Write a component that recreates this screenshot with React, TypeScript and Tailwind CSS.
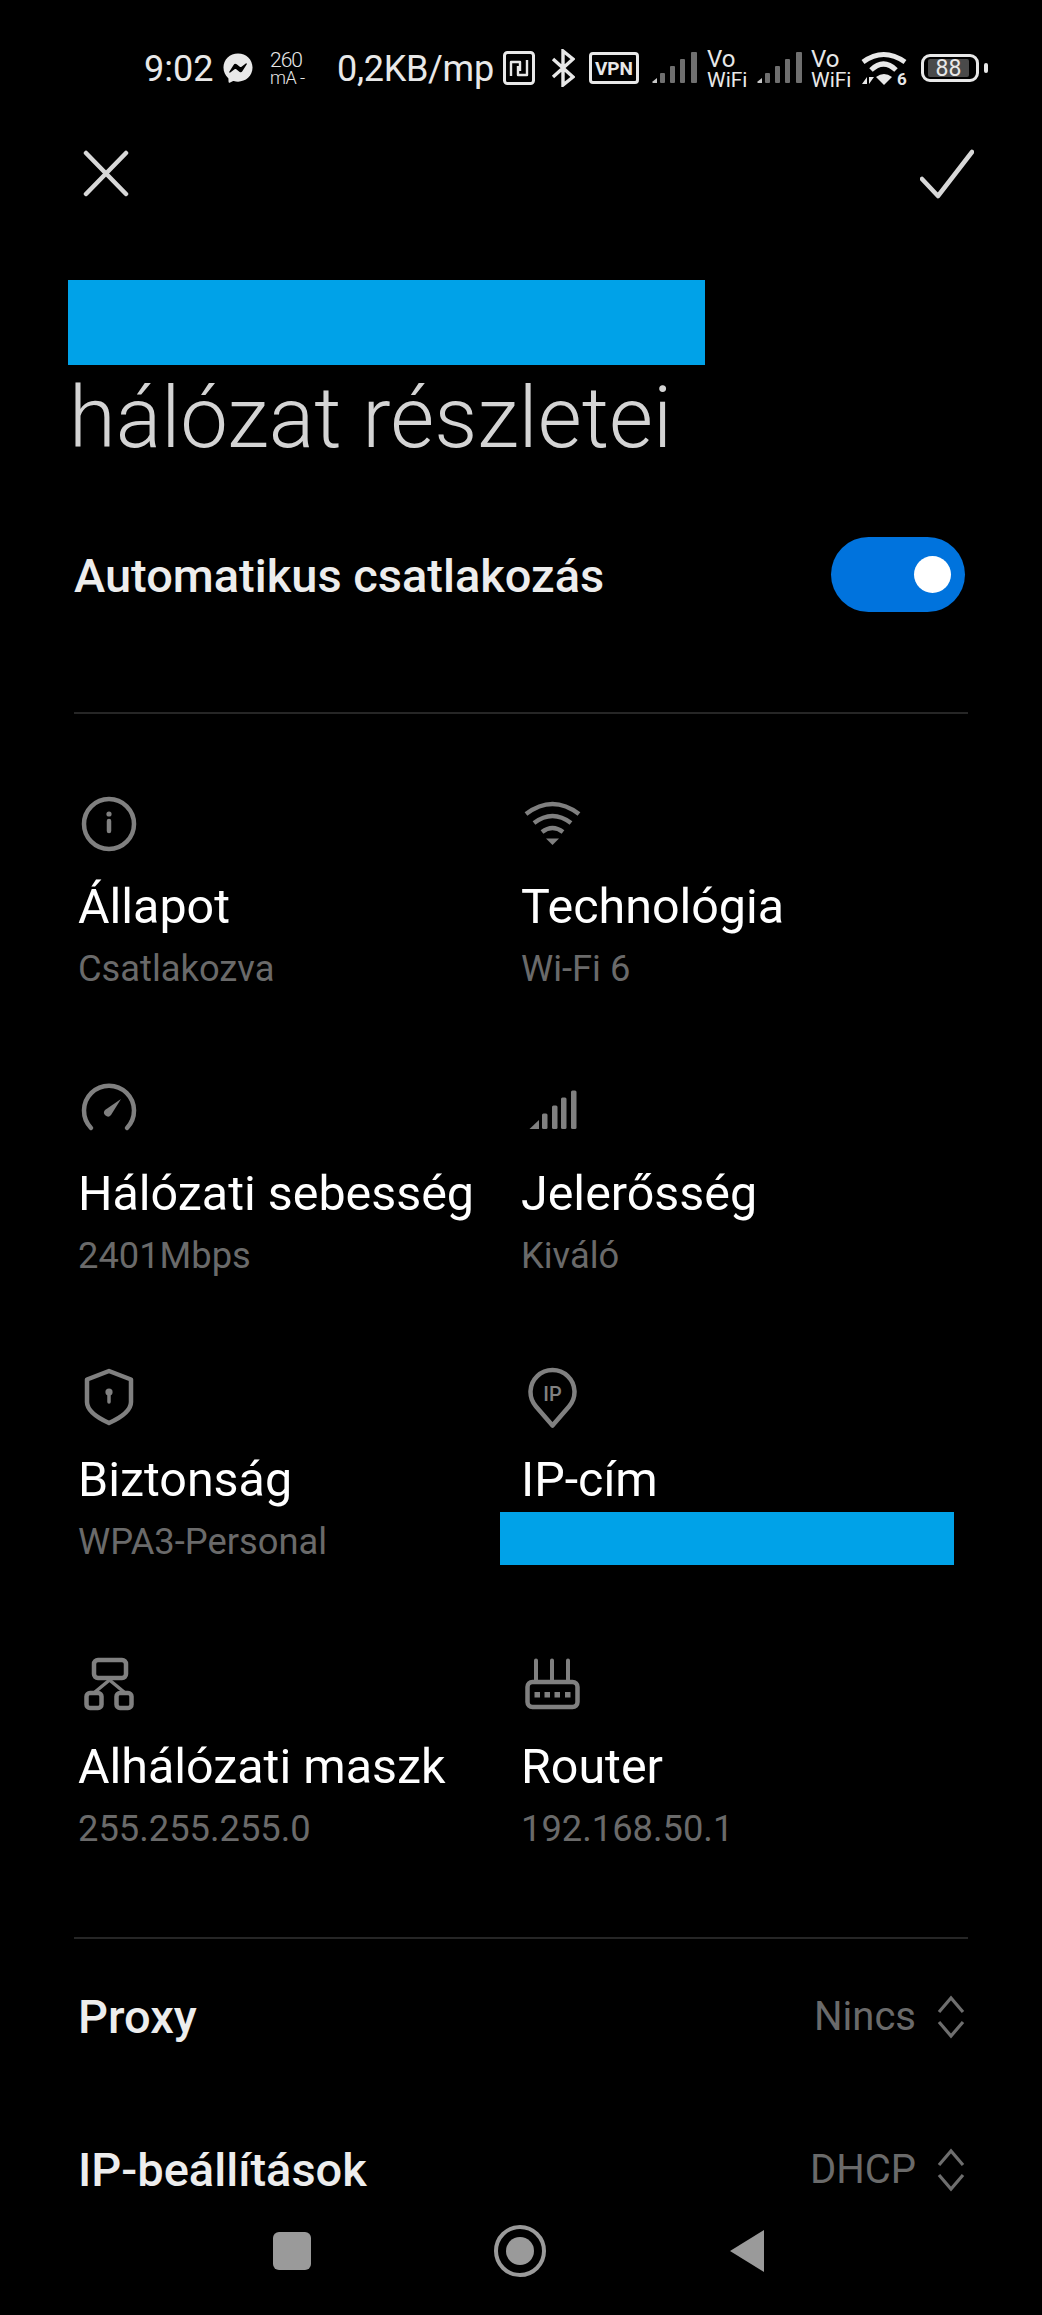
import { FaFacebookMessenger } from "react-icons/fa";

const ICON = "#808080";

function InfoIcon() {
  return (
    <svg width="64" height="64" viewBox="0 0 64 64" fill="none" stroke={ICON} strokeWidth="4.5" strokeLinecap="round">
      <circle cx="31" cy="33" r="25" />
      <path d="M31 30v10" />
      <circle cx="31" cy="23" r="2.6" fill={ICON} stroke="none" />
    </svg>
  );
}

function WifiIcon() {
  return (
    <svg width="64" height="64" viewBox="0 0 64 64" fill="none" stroke={ICON} strokeWidth="4.5">
      <path d="M5 23Q31.5 3 58 23" />
      <path d="M13 32Q31.5 18 50 32" />
      <path d="M21 41Q31.5 33 42 41" />
      <path d="M25 47.5h13l-6.5 6.5z" fill={ICON} stroke="none" />
    </svg>
  );
}

function SpeedIcon() {
  return (
    <svg width="64" height="64" viewBox="0 0 64 64" fill="none" stroke={ICON} strokeWidth="4.5" strokeLinecap="round">
      <path d="M13 50A25 25 0 1 1 49 50" />
      <path d="M27 32l16-11-10 16a3.5 3.5 0 0 1-6-5z" fill={ICON} stroke="none" />
    </svg>
  );
}

function SignalIcon() {
  return (
    <svg width="64" height="64" viewBox="0 0 64 64" fill={ICON}>
      <path d="M8.5 51L18 42v9z" />
      <rect x="21" y="35.5" width="5.5" height="15.5" rx="1.5" />
      <rect x="31" y="27.5" width="5.5" height="23.5" rx="1.5" />
      <rect x="40" y="19.5" width="5.5" height="31.5" rx="1.5" />
      <rect x="50" y="12.5" width="5.5" height="38.5" rx="1.5" />
    </svg>
  );
}

function ShieldIcon() {
  return (
    <svg width="64" height="64" viewBox="0 0 64 64" fill="none" stroke={ICON} strokeWidth="4.5" strokeLinejoin="round">
      <path d="M31 7L53 15.5V38Q53 49 31 59Q9 49 9 38V15.5Z" />
      <circle cx="31" cy="28" r="3.6" fill={ICON} stroke="none" />
      <path d="M31 28v10" strokeWidth="3.5" strokeLinecap="round" />
    </svg>
  );
}

function PinIcon() {
  return (
    <svg width="64" height="64" viewBox="0 0 64 64" fill="none" stroke={ICON} strokeWidth="4.5" strokeLinejoin="round">
      <path d="M31.5 61.5L15 42.5A22 22 0 1 1 48 42.5Z" />
      <text x="31.5" y="36.5" textAnchor="middle" fontSize="20" fontWeight="500" fill={ICON} stroke="none" fontFamily="Roboto, sans-serif">
        IP
      </text>
    </svg>
  );
}

function SubnetIcon() {
  return (
    <svg width="64" height="64" viewBox="0 0 64 64" fill="none" stroke={ICON} strokeWidth="4.5" strokeLinecap="round">
      <rect x="16" y="9" width="32" height="18" rx="4" />
      <rect x="8.5" y="42" width="15" height="15" rx="3.5" />
      <rect x="38.5" y="42" width="15" height="15" rx="3.5" />
      <path d="M31.5 29L17 41M31.5 29L46 41" strokeWidth="3.5" />
    </svg>
  );
}

function RouterIcon() {
  return (
    <svg width="64" height="64" viewBox="0 0 64 64" fill="none" stroke={ICON} strokeWidth="4.5" strokeLinecap="round">
      <rect x="6.5" y="31" width="50" height="25" rx="5" />
      <path d="M15 9.5v20M31 9.5v20M47 9.5v20" strokeWidth="4" />
      <g fill={ICON} stroke="none">
        <rect x="13.5" y="41" width="5.5" height="5.5" />
        <rect x="23.5" y="41" width="5.5" height="5.5" />
        <rect x="33.5" y="41" width="5.5" height="5.5" />
        <rect x="44" y="41" width="5.5" height="5.5" />
      </g>
    </svg>
  );
}

function Chevrons() {
  return (
    <svg width="28" height="44" viewBox="0 0 28 44" fill="none" stroke="#6e6e6e" strokeWidth="3.2" className="ml-[21px]">
      <path d="M2 17L14 3l12 14" />
      <path d="M2 27l12 14 12-14" />
    </svg>
  );
}

function StatusSignal() {
  return (
    <svg width="46" height="32" viewBox="0 0 46 32" fill="#6f6f6f">
      <path d="M0 30l5-4v5H1z" fill="#c8c8c8" />
      <rect x="8" y="21" width="5" height="10" rx="1" />
      <rect x="18" y="14" width="5" height="17" rx="1" />
      <rect x="28" y="7" width="5" height="24" rx="1" />
      <rect x="39" y="0" width="6" height="31" rx="1" />
    </svg>
  );
}

function VoWifi() {
  return (
    <div className="flex flex-col w-[41px] text-[#e8e8e8]">
      <span className="text-[24px] h-[24px] leading-[22px]">Vo</span>
      <span className="text-[21px] h-[16px] leading-[16px]">WiFi</span>
    </div>
  );
}

const cells = [
  { icon: <InfoIcon />, title: "Állapot", sub: "Csatlakozva" },
  { icon: <WifiIcon />, title: "Technológia", sub: "Wi-Fi 6" },
  { icon: <SpeedIcon />, title: "Hálózati sebesség", sub: "2401Mbps" },
  { icon: <SignalIcon />, title: "Jelerősség", sub: "Kiváló" },
  { icon: <ShieldIcon />, title: "Biztonság", sub: "WPA3-Personal" },
  { icon: <PinIcon />, title: "IP-cím", sub: "" },
  { icon: <SubnetIcon />, title: "Alhálózati maszk", sub: "255.255.255.0" },
  { icon: <RouterIcon />, title: "Router", sub: "192.168.50.1" },
];

export default function App() {
  return (
    <div className="w-[1042px] h-[2315px] overflow-hidden bg-black text-white font-['Roboto',sans-serif]">
      {/* Status bar */}
      <div className="h-[136px] pl-[144px] flex items-center text-[#e8e8e8]">
        <span className="text-[36px] w-[70px] shrink-0 pt-[2px]">9:02</span>
        <FaFacebookMessenger className="ml-[9px] text-[30px] shrink-0" />
        <div className="ml-[17px] w-[36px] shrink-0 flex flex-col items-start font-light">
          <span className="text-[21px] h-[20px] leading-[20px] tracking-[-1px]">260</span>
          <span className="text-[18px] h-[16px] leading-[16px] tracking-[-0.5px]">mA -</span>
        </div>
        <span className="ml-[31px] text-[36px] w-[157px] shrink-0 tracking-[-0.3px] pt-[2px]">0,2KB/mp</span>
        <svg width="32" height="34" viewBox="0 0 32 34" fill="none" stroke="#e8e8e8" strokeWidth="3" strokeLinejoin="round" className="ml-[9px] shrink-0">
          <rect x="1.5" y="1.5" width="29" height="31" rx="3" />
          <path d="M8 25V11H17V20M24 9V24H15V15" strokeWidth="2.4" />
        </svg>
        <svg width="24" height="38" viewBox="0 0 24 38" fill="none" stroke="#e8e8e8" strokeWidth="3.4" className="ml-[16px] shrink-0">
          <path d="M2 10l20 18-10 8V2l10 8L2 28" />
        </svg>
        <div className="ml-[14px] w-[50px] h-[32px] shrink-0 border-[3px] border-[#e8e8e8] rounded-[4px] flex items-center justify-center text-[19px] font-bold leading-none">
          VPN
        </div>
        <div className="ml-[13px]"><StatusSignal /></div>
        <div className="ml-[9px]"><VoWifi /></div>
        <div className="ml-[9px]"><StatusSignal /></div>
        <div className="ml-[8px]"><VoWifi /></div>
        <svg width="46" height="40" viewBox="0 0 46 40" fill="none" stroke="#e8e8e8" strokeWidth="5" className="ml-[9px] shrink-0 overflow-visible">
          <path d="M2 14Q22.500 -1 44 14" />
          <path d="M10 22Q22.500 10 35 22" />
          <path d="M15 29Q23 23 31 29L23 37Z" fill="#e8e8e8" stroke="none" />
          <path d="M1 36h5v-7zM8 29v7l5-7z" fill="#e8e8e8" stroke="none" />
          <text x="36" y="37" fontSize="17" fontWeight="700" fill="#e8e8e8" stroke="none" fontFamily="Roboto, sans-serif">6</text>
        </svg>
        <div className="ml-[14px] w-[58px] h-[28px] shrink-0 border-[3px] border-[#e8e8e8] rounded-[9px] py-[2px] pl-[4px] flex">
          <div className="w-[41px] bg-[#4a4a4a] rounded-[2px] flex items-center justify-center text-[23px] leading-none">88</div>
        </div>
        <div className="ml-[5px] w-[4px] h-[10px] rounded-full bg-[#e8e8e8] shrink-0" />
      </div>

      {/* Close / confirm */}
      <div className="mt-[8px] h-[60px] pl-[82px] pr-[68px] flex items-center justify-between">
        <svg width="48" height="48" viewBox="0 0 48 48" fill="none" stroke="#d8d8d8" strokeWidth="4.500" strokeLinecap="round">
          <path d="M4 3l40 41M44 3L4 44" />
        </svg>
        <svg width="54" height="50" viewBox="0 0 54 50" fill="none" stroke="#d8d8d8" strokeWidth="4.500" strokeLinecap="round" strokeLinejoin="round">
          <path d="M2 30l16 17L52 3" />
        </svg>
      </div>

      {/* Title */}
      <div className="mt-[76px] ml-[68px] w-[637px] h-[85px] bg-[#00a2e8]" />
      <h1 className="mt-[3px] ml-[69px] text-[85px] leading-[100px] font-light text-[#d4d4d4]">hálózat részletei</h1>

      {/* Auto-connect */}
      <div className="mt-[69px] h-[75px] pl-[74px] pr-[77px] flex items-center justify-between">
        <span className="text-[47px] font-medium text-[#ededed] pt-[4px]">Automatikus csatlakozás</span>
        <div className="w-[134px] h-[75px] rounded-full bg-[#0073dd] flex items-center justify-end pr-[14px]">
          <div className="w-[37px] h-[37px] rounded-full bg-white" />
        </div>
      </div>

      <div className="mt-[100px] mx-[74px] h-[2px] bg-[#262626]" />

      {/* Details */}
      <div className="mt-[77px] pl-[78px] grid grid-cols-[443px_1fr] auto-rows-[286.5px]">
        {cells.map((c) => (
          <div key={c.title}>
            <div className="h-[64px]">{c.icon}</div>
            <div className="mt-[22px] text-[48.4px] leading-[60px] whitespace-nowrap">{c.title}</div>
            {c.sub ? (
              <div className="mt-[8px] text-[36.3px] leading-[48px] text-[#6a6a6a]">{c.sub}</div>
            ) : (
              <div className="mt-[2px] ml-[-21px] w-[454px] h-[53px] bg-[#00a2e8]" />
            )}
          </div>
        ))}
      </div>

      <div className="mx-[74px] h-[2px] bg-[#262626]" />

      {/* Options */}
      <div className="mt-[38px] h-[80px] pl-[78px] pr-[77px] flex items-center justify-between">
        <span className="text-[47px] font-medium text-[#ededed]">Proxy</span>
        <div className="flex items-center text-[40px] text-[#6a6a6a]">Nincs<Chevrons /></div>
      </div>
      <div className="mt-[73px] h-[80px] pl-[78px] pr-[77px] flex items-center justify-between">
        <span className="text-[47px] font-medium text-[#ededed]">IP-beállítások</span>
        <div className="flex items-center text-[40px] text-[#6a6a6a]">DHCP<Chevrons /></div>
      </div>

      {/* Nav bar */}
      <div className="mt-[11px] h-[60px] pl-[273px] flex items-center">
        <div className="w-[38px] h-[38px] rounded-[6px] bg-[#9a9a9a]" />
        <div className="ml-[183px] w-[52px] h-[52px] rounded-full border-[4px] border-[#9a9a9a] flex items-center justify-center">
          <div className="w-[28px] h-[28px] rounded-full bg-[#9a9a9a]" />
        </div>
        <svg width="36" height="44" viewBox="0 0 36 44" fill="#9a9a9a" className="ml-[183px]">
          <path d="M35 1v42L1 22z" />
        </svg>
      </div>
    </div>
  );
}
